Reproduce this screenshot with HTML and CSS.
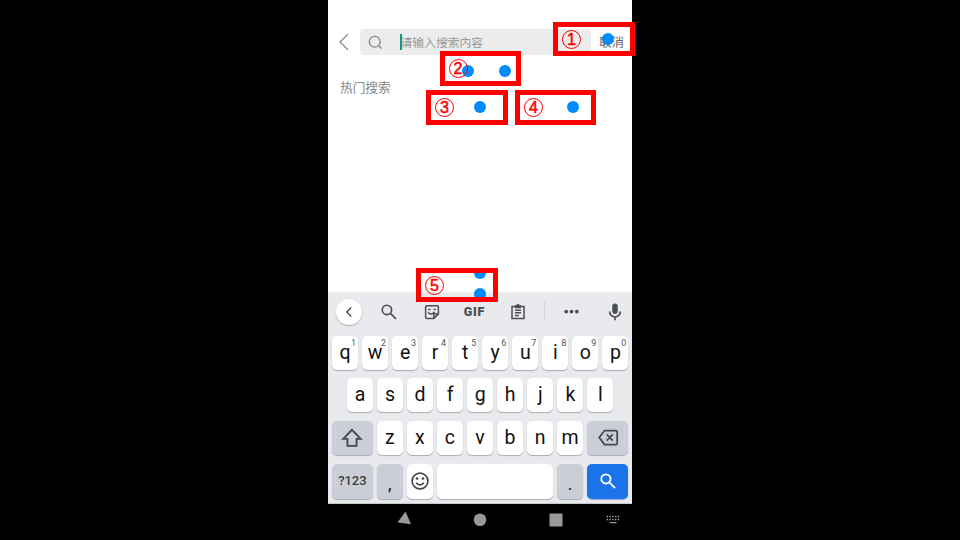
FILE: index.html
```
<!DOCTYPE html>
<html lang="zh-CN">
<head>
<meta charset="utf-8">
<title>搜索</title>
<link rel="stylesheet" href="styles.css">
</head>
<body>
<main class="stage">
  <div class="phone">
    <header class="search-bar">
      <svg class="back" viewBox="0 0 12 18"><path d="M10 1.200 2 9l8 7.800"/></svg>
      <div class="field">
        <svg class="field-icon" viewBox="0 0 16 16"><circle cx="7.2" cy="7.2" r="5.8"/><path d="m11.4 11.4 3 3"/></svg>
        <span class="caret"></span>
        <span class="placeholder">请输入搜索内容</span>
      </div>
      <span class="cancel">取消</span>
    </header>
    <section class="content"><h1 class="heading">热门搜索</h1></section>
    <section class="keyboard">
      <div class="toolbar">
        <span class="tool round"><svg viewBox="0 0 24 24"><path class="line" d="m15 6-6 6 6 6"/></svg></span>
        <span class="tool"><svg class="lens" viewBox="0 0 24 24"><circle class="line" cx="9.5" cy="9.5" r="5.6"/><path class="line" d="m14 14 6.300 6.300"/></svg></span>
        <span class="tool"><svg viewBox="0 0 24 24"><path class="line" d="M5 3.500h14a1.500 1.500 0 0 1 1.500 1.500v9.500l-6 6H5A1.500 1.500 0 0 1 3.500 19V5A1.500 1.500 0 0 1 5 3.500ZM20 14.500h-4.500a1 1 0 0 0-1 1V20M7 12c1 3.500 5.500 4 8.500 0M7 8.500h3M14 8.500h3"/></svg></span>
        <span class="tool gif">GIF</span>
        <span class="tool"><svg viewBox="0 0 24 24"><path class="line" d="M4 4.500h16v16H4zM8 9.500h8M8 13h8M8 16.500h5"/><path d="M8 3h2a2 2 0 0 1 4 0h2v4H8z"/></svg></span>
        <span class="divider"></span>
        <span class="tool more"><svg viewBox="0 0 24 24"><circle cx="3.500" cy="12" r="3"/><circle cx="12" cy="12" r="3"/><circle cx="20.500" cy="12" r="3"/></svg></span>
        <span class="tool mic"><svg viewBox="0 0 24 24"><path d="M12 14.500c1.900 0 3.300-1.500 3.300-3.300V5a3.300 3.300 0 0 0-6.600 0v6.200c0 1.800 1.400 3.300 3.300 3.300Z"/><path class="line" d="M5.500 11.500a6.500 6.500 0 0 0 13 0M12 18v4"/></svg></span>
      </div>
      <div class="row">
        <span class="key">q<sup>1</sup></span><span class="key">w<sup>2</sup></span><span class="key">e<sup>3</sup></span><span class="key">r<sup>4</sup></span><span class="key">t<sup>5</sup></span><span class="key">y<sup>6</sup></span><span class="key">u<sup>7</sup></span><span class="key">i<sup>8</sup></span><span class="key">o<sup>9</sup></span><span class="key">p<sup>0</sup></span>
      </div>
      <div class="row home">
        <span class="key">a</span><span class="key">s</span><span class="key">d</span><span class="key">f</span><span class="key">g</span><span class="key">h</span><span class="key">j</span><span class="key">k</span><span class="key">l</span>
      </div>
      <div class="row">
        <span class="key wide gray"><svg class="glyph" viewBox="0 0 24 24"><path d="M12 3 2.500 13H7v7.500h10V13h4.500z"/></svg></span><span class="key">z</span><span class="key">x</span><span class="key">c</span><span class="key">v</span><span class="key">b</span><span class="key">n</span><span class="key">m</span><span class="key wide gray"><svg class="glyph delete" viewBox="0 0 24 24"><path d="M8 4h13q1.500 0 1.500 1.500v13q0 1.500-1.500 1.500H8L2 12zM10.500 8.500l7 7M17.500 8.500l-7 7"/></svg></span>
      </div>
      <div class="row last">
        <span class="key wide gray symbols">?123</span><span class="key gray punct">,</span><span class="key"><svg class="glyph smile" viewBox="0 0 24 24"><circle cx="12" cy="12" r="9.500"/><path d="M7.500 14c1.600 3.500 7.400 3.500 9 0"/><circle class="eye" cx="8.500" cy="9" r="1.600"/><circle class="eye" cx="15.500" cy="9" r="1.600"/></svg></span><span class="key space"></span><span class="key gray punct">.</span><span class="key wide go"><svg class="glyph" viewBox="0 0 24 24"><circle cx="9.500" cy="9.500" r="5.600"/><path d="m14 14 6.500 6.500"/></svg></span>
      </div>
    </section>
    <nav class="nav">
      <svg viewBox="0 0 304 36">
        <path d="M77.500 7.500 69.500 18.500l13.500 1.700z"/>
        <circle cx="152" cy="15.800" r="6.300"/>
        <rect x="221.500" y="9.500" width="13" height="13" rx=".8"/>
        <path class="keys" d="M278.500 12.500h13M278.500 15.500h13"/>
        <path d="M281.500 18h7v1.200h-7z"/>
      </svg>
    </nav>
  </div>

  <div class="mark m1"><span class="num">1</span><i class="dot"></i></div>
  <div class="mark m2"><i class="dot"></i><i class="dot second"></i><span class="num">2</span></div>
  <div class="mark m3"><span class="num">3</span><i class="dot"></i></div>
  <div class="mark m4"><span class="num">4</span><i class="dot"></i></div>
  <div class="mark m5"><span class="num">5</span><i class="dot"></i><i class="dot second"></i></div>
</main>
</body>
</html>
```
FILE: styles.css
```
* { box-sizing: border-box; }
body { margin: 0; background: #000; font-family: Roboto, "Noto Sans CJK SC", sans-serif; }
.stage { position: relative; width: 960px; height: 540px; overflow: hidden; display: flex; justify-content: center; }
.phone { width: 304px; height: 540px; background: #fff; display: flex; flex-direction: column; }

.search-bar { display: flex; align-items: center; height: 26px; margin-top: 29px; padding-left: 10px; }
.back { width: 12px; height: 18px; fill: none; stroke: #777; stroke-width: 1.1; }
.field { display: flex; align-items: center; width: 231px; height: 26px; margin-left: 10px; padding-left: 8px; background: #ececec; border-radius: 4px; }
.field-icon { width: 15px; height: 15px; fill: none; stroke: #888; stroke-width: 1.4; }
.caret { width: 2px; height: 16px; margin-left: 16.500px; background: #0a9a84; }
.placeholder { margin-left: -1px; padding-top: 1px; font-size: 11.800px; line-height: 24px; color: #999; white-space: nowrap; }
.cancel { margin-left: 8px; padding-top: 1px; font-size: 12.500px; line-height: 24px; color: #666; white-space: nowrap; }
.content { flex: 1; padding: 23px 12px 0; }
.heading { margin: 0; font-size: 12.700px; font-weight: 400; line-height: 20px; color: #888; }

.keyboard { height: 211px; padding: 0 3px 0 4px; background: #e8eaed; border-bottom: 1px solid #c6c8c9; box-shadow: 0 -1px 2px #0001; }
.toolbar { display: flex; align-items: center; height: 37px; margin-bottom: 5.500px; }
.tool { display: flex; align-items: center; justify-content: center; width: 26px; height: 26px; margin-right: 17px; color: #4b4e52; }
.tool svg { width: 18px; height: 18px; fill: currentColor; }
.tool .lens { width: 20px; height: 20px; }
.tool .line { fill: none; stroke: currentColor; stroke-width: 2; }
.round { margin-left: 4px; margin-right: 13.500px; background: #fff; border-radius: 50%; box-shadow: 0 1px 1.500px #0004; }
.round svg { width: 18px; height: 18px; }
.gif { margin-right: 17px; font-size: 12.500px; font-weight: 900; letter-spacing: .8px; }
.divider { width: 1px; height: 19px; margin: 0 13.500px 0 -3.500px; background: #d0d2d6; }
.more { margin-right: 17px; }
.more svg { width: 15px; height: 15px; }
.mic { margin-right: 0; }
.mic svg { width: 20px; height: 20px; }

.row { display: flex; gap: 4.060px; height: 35px; margin-bottom: 7.700px; }
.home { padding-left: 15px; }
.key { position: relative; flex: 0 0 26px; display: flex; align-items: center; justify-content: center; height: 34px; background: #fff; border-radius: 5px; box-shadow: 0 1px 1px #a8abb0; font-size: 19.500px; line-height: 34px; color: #111; }
.key sup { position: absolute; top: 2px; right: 2px; font-size: 9px; line-height: 10px; color: #555; }
.wide { flex-basis: 40.800px; }
.gray { background: #cbced6; }
.last { margin-bottom: 0; }
.last .key { height: 35px; }
.symbols { font-size: 13px; font-weight: 500; color: #3c4043; }
.last .symbols { font-size: 13px; }
.punct { padding-top: 6px; font-size: 18px; }
.space { flex: 0 0 116.200px; }
.glyph { width: 22px; height: 22px; fill: none; stroke: #45484d; stroke-width: 2; }
.delete { height: 21px; width: 24px; }
.smile { width: 20px; height: 20px; }
.eye { fill: #45484d; stroke: none; }
.go { background: #1a73e8; box-shadow: 0 1px 1px #9aacc9; }
.go .glyph { width: 20px; height: 20px; stroke: #fff; stroke-width: 2.100; }

.nav { height: 36px; background: #000; }
.nav svg { display: block; width: 304px; height: 36px; fill: #999; }
.nav .keys { stroke: #999; stroke-width: 1.400; stroke-dasharray: 1.500 1.300; }

.mark { position: absolute; width: 82px; height: 35px; border: 5px solid #f00; overflow: hidden; }
.m1 { left: 553px; top: 22px; height: 34px; }
.m2 { left: 440px; top: 51px; width: 81px; }
.m3 { left: 426px; top: 90px; }
.m4 { left: 515px; top: 90px; width: 81px; }
.m5 { left: 416px; top: 268px; height: 34px; }
.num { position: absolute; left: 4px; top: 3px; width: 19px; height: 19px; border: 1.400px solid #f00; border-radius: 50%; font: 16px/17px "Liberation Sans", sans-serif; -webkit-text-stroke: .5px #f00; text-align: center; color: #f00; }
.m2 .num { left: 3.500px; }
.dot { position: absolute; left: 49px; top: 6px; width: 12px; height: 12px; border-radius: 50%; background: #008cff; }
.m1 .dot { left: 44px; }
.m2 .dot { left: 17px; top: 9px; }
.m2 .second { left: 54px; }
.m4 .dot { left: 47px; }
.m5 .dot { left: 53px; top: -6px; }
.m5 .second { top: 15px; }
.m3 .dot { left: 43px; }
```
